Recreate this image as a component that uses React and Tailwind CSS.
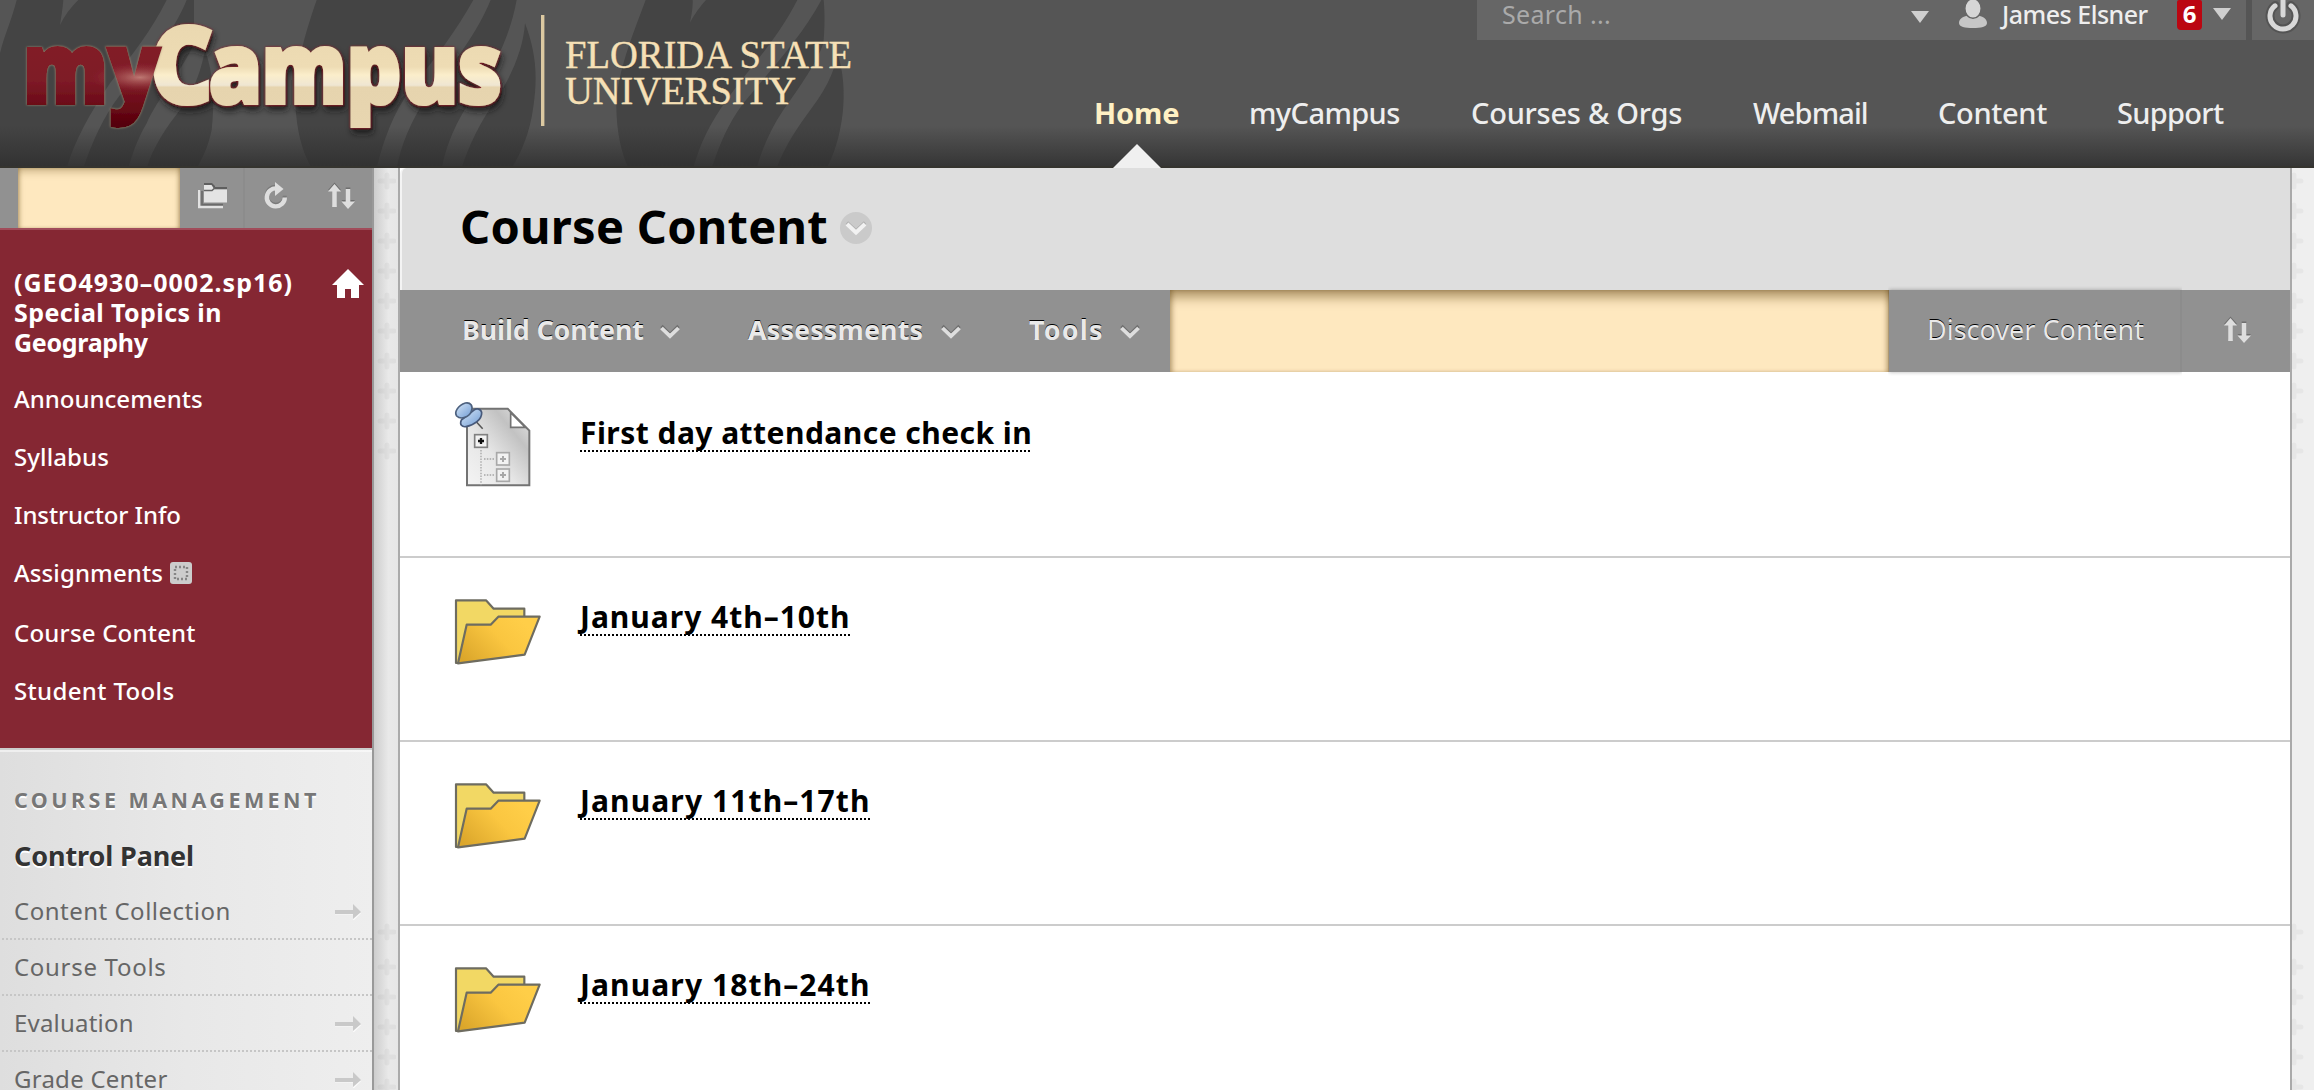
import React from "react";

const NAV = [
  { label: "Home", cls: "w-[155px] font-bold text-[#fff1c4] tracking-[-0.13px]" },
  { label: "myCampus", cls: "w-[222px] tracking-[-0.6px]" },
  { label: "Courses & Orgs", cls: "w-[282px] tracking-[-0.25px]" },
  { label: "Webmail", cls: "w-[185px] tracking-[-0.9px]" },
  { label: "Content", cls: "w-[179px] tracking-[-0.35px]" },
  { label: "Support", cls: "w-[130px] tracking-[-0.7px]" },
];

const MENU = [
  { label: "Announcements", cls: "h-[58px] tracking-[0px]" },
  { label: "Syllabus", cls: "h-[58px] tracking-[0.1px]" },
  { label: "Instructor Info", cls: "h-[58px] tracking-[-0.1px]" },
  { label: "Assignments", cls: "h-[60px] pb-[2px] tracking-[0.1px]", badge: true },
  { label: "Course Content", cls: "h-[58px] tracking-[0.2px]" },
  { label: "Student Tools", cls: "h-[58px] tracking-[0.35px]" },
];

const PANEL = [
  { label: "Content Collection", cls: "tracking-[0.5px]", arrow: true },
  { label: "Course Tools", cls: "tracking-[0.7px]", arrow: false },
  { label: "Evaluation", cls: "tracking-[0.2px]", arrow: true },
  { label: "Grade Center", cls: "tracking-[0.25px]", arrow: true },
];

const ROWS = [
  { label: "First day attendance check in", cls: "tracking-[0.46px]", doc: true },
  { label: "January 4th–10th", cls: "tracking-[0.98px]" },
  { label: "January 11th–17th", cls: "tracking-[1.1px]" },
  { label: "January 18th–24th", cls: "tracking-[1.1px]" },
];

function Stripes() {
  return (
    <svg className="absolute left-0 top-0" width="860" height="168" viewBox="0 0 2580 504">
      <g fill="#444444">
        <path d="M50 0C35 60 15 100 0 160V504H200C225 420 270 340 330 250C400 160 455 90 500 0H235C210 25 195 45 180 75C184 50 188 25 190 0Z" />
        <path d="M560 0H582V130C560 190 470 300 440 370C410 420 395 470 385 504H250C275 430 310 350 360 285C440 190 520 100 560 0Z" />
        <path d="M615 150C640 220 645 300 635 390C625 440 605 480 590 504H440C460 440 500 380 540 330C590 260 605 200 615 150Z" />
        <path d="M950 0C905 130 880 230 888 340C895 420 915 470 935 504H1130C1150 420 1180 340 1230 270C1310 170 1370 90 1420 0Z" />
        <path d="M1472 0H1550C1530 110 1480 210 1420 290C1370 360 1340 430 1325 504H1190C1205 430 1230 370 1280 290C1370 180 1430 100 1472 0Z" />
        <path d="M1575 70C1605 150 1615 220 1600 320C1590 400 1560 465 1535 504H1385C1405 440 1440 370 1480 310C1530 240 1570 150 1575 70Z" />
        <path d="M1937 0C1900 100 1850 220 1849 320C1850 400 1865 460 1885 504H2080C2100 430 2130 370 2180 300C2260 190 2330 120 2392 0H2118C2100 20 2085 40 2070 68C2074 45 2079 25 2078 0Z" />
        <path d="M2464 0H2471C2475 40 2474 90 2470 130C2450 190 2400 260 2350 330C2310 390 2285 450 2270 504H2135C2160 430 2185 370 2230 310C2320 200 2405 110 2464 0Z" />
        <path d="M2512 160C2530 210 2535 280 2528 340C2520 410 2500 470 2480 504H2330C2350 450 2380 400 2420 345C2470 280 2505 220 2512 160Z" />
      </g>
    </svg>
  );
}

function Logo() {
  return (
    <svg className="absolute left-0 top-0" width="870" height="168" viewBox="0 0 870 168">
      <defs>
        <linearGradient id="garnet" gradientUnits="userSpaceOnUse" x1="0" y1="45" x2="0" y2="125">
          <stop offset="0" stopColor="#821b28" />
          <stop offset="0.45" stopColor="#7e1a27" />
          <stop offset="0.8" stopColor="#680915" />
          <stop offset="1" stopColor="#55000a" />
        </linearGradient>
        <linearGradient id="gold" gradientUnits="userSpaceOnUse" x1="0" y1="24" x2="0" y2="126">
          <stop offset="0" stopColor="#ead8b0" />
          <stop offset="0.42" stopColor="#eedcb4" />
          <stop offset="0.5" stopColor="#fbeecb" />
          <stop offset="0.6" stopColor="#efe6d2" />
          <stop offset="0.62" stopColor="#e6d4ae" />
          <stop offset="1" stopColor="#e8d6b0" />
        </linearGradient>
        <radialGradient id="shine" gradientUnits="userSpaceOnUse" cx="140" cy="78" r="50" gradientTransform="translate(0 54) scale(1 .3)">
          <stop offset="0" stopColor="#e7b7a5" stopOpacity=".6" />
          <stop offset="1" stopColor="#a04040" stopOpacity="0" />
        </radialGradient>
        <pattern id="garnetShine" patternUnits="userSpaceOnUse" width="870" height="168">
          <rect width="870" height="168" fill="url(#garnet)" />
          <rect width="870" height="168" fill="url(#shine)" />
        </pattern>
        <filter id="drop" x="-10%" y="-20%" width="120%" height="150%">
          <feDropShadow dx="0" dy="0" stdDeviation="0.9" floodColor="#a51e2c" floodOpacity="1" />
          <feDropShadow dx="2" dy="5" stdDeviation="3" floodColor="#161616" floodOpacity=".85" />
        </filter>
        <filter id="rim" x="-10%" y="-20%" width="120%" height="150%">
          <feDropShadow dx="0" dy="0" stdDeviation="0.8" floodColor="#b49d80" floodOpacity=".8" />
        </filter>
      </defs>
      <g fontFamily="'Open Sans', sans-serif" fontWeight="800" strokeLinejoin="miter" strokeWidth="4">
        <g filter="url(#drop)" fill="url(#gold)" stroke="url(#gold)">
          <text x="150" y="103" fontSize="107" textLength="63" lengthAdjust="spacingAndGlyphs">C</text>
          <text x="209" y="102.5" fontSize="98" textLength="293" lengthAdjust="spacingAndGlyphs">ampus</text>
        </g>
        <g filter="url(#rim)" fill="url(#garnetShine)" stroke="url(#garnetShine)">
          <text x="23" y="102.5" fontSize="98" textLength="137" lengthAdjust="spacingAndGlyphs">my</text>
        </g>
      </g>
      <rect x="541" y="15" width="3.4" height="111" fill="#dcc9a1" />
      <g fontFamily="'Liberation Serif', serif" fontSize="40.5" fill="#f6e0b6" stroke="#f6e0b6" strokeWidth=".4">
        <text x="565" y="68" textLength="287" lengthAdjust="spacingAndGlyphs">FLORIDA STATE</text>
        <text x="565" y="104" textLength="231" lengthAdjust="spacingAndGlyphs">UNIVERSITY</text>
      </g>
    </svg>
  );
}

function DownTriangle({ className }) {
  return (
    <svg className={className} width="18" height="12" viewBox="0 0 18 12">
      <path d="M0 0H18L9 12Z" fill="#cfcfcf" />
    </svg>
  );
}

function Chevron({ className }) {
  return (
    <svg className={className} width="22" height="17" viewBox="0 0 22 17">
      <path d="M2.5 3L11 11.5L19.5 3" fill="none" stroke="#6f6f6f" strokeWidth="3.2" />
      <path d="M2.5 5L11 13.2L19.5 5" fill="none" stroke="#dedede" strokeWidth="3.8" />
    </svg>
  );
}

function Swap({ className }) {
  const up = "M6.5 0L13 7.5H8.800V23H4.200V7.500H0Z";
  const down = "M17.700 5H22.300V17.500H27L20 25L13.500 17.500H17.700Z";
  return (
    <svg className={className} width="28" height="28" viewBox="0 -2 28 28">
      <g fill="#6f6f6f" transform="translate(0 -1.600)">
        <path d={up} />
        <path d={down} />
      </g>
      <g fill="#dedede">
        <path d={up} />
        <path d={down} />
      </g>
    </svg>
  );
}

function Header() {
  return (
    <header className="relative h-[168px] overflow-hidden bg-[#555555]">
      <Stripes />
      <div className="absolute inset-x-0 bottom-0 h-[42px] bg-linear-to-b from-transparent to-[#2e2e2e]/85" />
      <div className="absolute inset-x-0 bottom-0 h-[2px] bg-[#35342f]" />
      <Logo />
      <div className="relative flex h-full flex-col">
        <div className="ml-[1477px] flex h-[40px]">
          <div className="flex w-[769px] bg-[#666666] text-[25px] leading-[28px]">
            <span className="ml-[25px] w-[409px] tracking-[0.33px] text-[#aaaaaa]">Search ...</span>
            <DownTriangle className="mt-[11px]" />
            <svg className="ml-[30px]" width="28" height="30" viewBox="0 0 28 30">
              <path d="M0 23C0 18 6 16 9 15.500L14 18.500L19 15.500C22 16 28 18 28 23C28 27 22 28 14 28S0 27 0 23Z" fill="#c6c6c6" />
              <ellipse cx="14" cy="8.500" rx="8.200" ry="9.800" fill="#d6d6d6" stroke="#666" strokeWidth="1.500" />
            </svg>
            <span className="ml-[15px] w-[175px] font-medium tracking-[-0.5px] text-[#eeeeee]">James Elsner</span>
            <span className="h-[30px] w-[25px] rounded-b-[4px] rounded-t-[2px] bg-[#bb0611] text-center text-[24px] font-bold leading-[28px] text-white">6</span>
            <DownTriangle className="ml-[11px] mt-[8px]" />
          </div>
          <div className="ml-[6px] flex w-[62px] justify-center bg-[#666666]">
            <svg width="36" height="36" viewBox="0 0 36 36">
              <g fill="none" stroke="#3f3f3f" strokeOpacity=".45" strokeWidth="9" strokeLinecap="round">
                <path d="M10.200 5.500A13 13 0 1 0 25.800 5.500" />
              </g>
              <g fill="none" stroke="#d8d8d8" strokeWidth="5" strokeLinecap="round">
                <path d="M10 5.800A13 13 0 1 0 26 5.800" />
                <path d="M18 -3V15" />
              </g>
            </svg>
          </div>
        </div>
        <nav className="ml-[1094px] mt-[53px] flex text-[29px] font-medium leading-[40px] text-[#eeeeee]">
          {NAV.map((n) => (
            <span key={n.label} className={`shrink-0 whitespace-nowrap ${n.cls}`}>{n.label}</span>
          ))}
        </nav>
        <svg className="ml-[1113px] mt-auto" width="48" height="24" viewBox="0 0 48 24">
          <path d="M0 24L24 0L48 24Z" fill="#f0f0f0" />
        </svg>
      </div>
    </header>
  );
}

function HeaderTools() {
  return (
    <div className="flex h-[60px] bg-[#919191]">
      <div className="ml-[18px] w-[162px] bg-[#fee8bf] shadow-[inset_0_5px_8px_-2px_rgba(90,60,10,.35),inset_3px_0_4px_-2px_rgba(90,60,10,.4),inset_-3px_0_4px_-2px_rgba(90,60,10,.4)]" />
      <div className="flex w-[65px] border-r-2 border-[#8c8c8c] pl-[18px] pt-[14px]">
        <svg width="30" height="28" viewBox="0 0 30 28">
          <path d="M6 3V1H14L17 4V5H29V7H6Z" fill="#5e5e5e" />
          <path d="M1 8V25H25" fill="none" stroke="#e2e2e2" strokeWidth="2.400" />
          <path d="M4 9V22.600H25" fill="none" stroke="#6a6a6a" strokeWidth="1.600" />
          <path d="M6 3H13.500L16.500 7.500H29V20.500H6Z" fill="#e4e4e4" />
          <path d="M6 8.500H14L17 5.800" fill="none" stroke="#666" strokeWidth="1.500" />
        </svg>
      </div>
      <svg className="ml-[18px] mt-[14px]" width="26" height="28" viewBox="0 0 26 28">
        <path d="M14 6A9 9 0 1 0 21.800 15" fill="none" stroke="#7a7a7a" strokeWidth="4" transform="translate(0 -1.200)" />
        <path d="M14 6.500A9 9 0 1 0 21.800 15.500" fill="none" stroke="#dedede" strokeWidth="4.400" />
        <path d="M12 0L20.500 7L12 14Z" fill="#dedede" />
      </svg>
      <Swap className="ml-[39px] mt-[14px]" />
    </div>
  );
}

function CourseMenu() {
  return (
    <div className="h-[520px] border-t-2 border-[#a14c5a] bg-[#852733] pl-[14px] pt-[37px] text-white">
      <div className="flex justify-between pr-[8px]">
        <div className="text-[25px] font-bold leading-[30px]">
          <div className="tracking-[1.020px]">(GEO4930–0002.sp16)</div>
          <div className="tracking-[0.400px]">Special Topics in</div>
          <div className="tracking-[-0.300px]">Geography</div>
        </div>
        <svg className="mt-[2px]" width="32" height="29" viewBox="0 0 32 29">
          <path d="M16 0L32 16H27V29H19V20H13V29H5V16H0Z" fill="#fff" />
        </svg>
      </div>
      <ul className="mt-[13px] text-[24px] font-medium">
        {MENU.map((m) => (
          <li key={m.label} className={`flex items-center ${m.cls}`}>
            {m.label}
            {m.badge && (
              <svg className="ml-[7px]" width="22" height="22" viewBox="0 0 22 22">
                <rect width="22" height="22" rx="3" fill="#cccccc" />
                <rect x="5" y="5" width="12" height="12" fill="none" stroke="#858585" strokeWidth="2.400" strokeDasharray="2 2" />
              </svg>
            )}
          </li>
        ))}
      </ul>
    </div>
  );
}

function ControlPanel() {
  return (
    <div className="h-[342px] overflow-hidden border-t-2 border-[#cccccc] bg-linear-to-r from-[#dedede] via-[#e8e8e8] to-[#eeeeee] [text-shadow:0_2px_0_#ffffff]">
      <div className="border-t-2 border-white/50 pl-[14px] pt-[33px] text-[21.5px] font-bold leading-[30px] tracking-[3.460px] text-[#777777]">COURSE MANAGEMENT</div>
      <div className="mt-[21px] pl-[14px] text-[27px] font-bold leading-[40px] tracking-[-0.120px] text-[#333333]">Control Panel</div>
      <ul className="mt-[8px] text-[24px] leading-[53px] text-[#666666] [text-shadow:none]">
        {PANEL.map((p) => (
          <li key={p.label} className="flex h-[56px] justify-between bg-[repeating-linear-gradient(90deg,transparent_0_2px,#c6c6c6_2px_4px)] bg-[length:100%_2px] bg-bottom bg-no-repeat pl-[14px] pr-[11px]">
            <span className={p.cls}>{p.label}</span>
            {p.arrow && (
              <svg className="mt-[20px]" width="26" height="16" viewBox="0 0 26 16">
                <path d="M0 8.500H18V2L26 9.500L18 17V10.500H0Z" fill="#fafafa" />
                <path d="M0 6H18V0L26 8L18 15V10H0Z" fill="#c9c9c9" />
              </svg>
            )}
          </li>
        ))}
      </ul>
    </div>
  );
}

const PLUSES = [...Array.from({ length: 10 }, (_, i) => 13 + i * 30), 764, 799, 829, 859, 889, 919];

function Texture({ cx }) {
  return (
    <svg width="22" height="922" viewBox="0 0 22 922">
      {PLUSES.map((y) => (
        <path key={y} d={`M${cx - 7} ${y}H${cx + 7}M${cx} ${y - 6}V${y + 6}`} stroke="#000" strokeOpacity=".035" strokeWidth="5" strokeLinecap="round" />
      ))}
    </svg>
  );
}

function FolderIcon() {
  return (
    <svg width="88" height="67" viewBox="75 655 264 201">
      <defs>
        <linearGradient id="front" x1="0" y1=".8" x2=".9" y2=".3">
          <stop offset="0" stopColor="#dba62b" />
          <stop offset=".6" stopColor="#fac640" />
          <stop offset="1" stopColor="#ffce48" />
        </linearGradient>
      </defs>
      <g stroke="#6e6c60" strokeWidth="6.500" strokeLinejoin="round">
        <path d="M81 662H171L194 687H286V720L90 850H81Z" fill="#f2d864" />
        <path d="M113 735H185L208 711H332L287 825L87 851Z" fill="url(#front)" />
      </g>
    </svg>
  );
}

function DocIcon() {
  return (
    <svg width="79" height="87" viewBox="69 60 237 261">
      <defs>
        <linearGradient id="paper" x1="0" y1="1" x2=".9" y2=".1">
          <stop offset="0" stopColor="#f4f4f4" />
          <stop offset=".45" stopColor="#e6e6e6" />
          <stop offset=".8" stopColor="#c2c2c2" />
          <stop offset="1" stopColor="#dadada" />
        </linearGradient>
        <linearGradient id="pin" x1="0" y1="0" x2="1" y2="1">
          <stop offset="0" stopColor="#d9e8f8" />
          <stop offset="1" stopColor="#6f9bd4" />
        </linearGradient>
      </defs>
      <path d="M111 86H233L298 152V316H111Z" fill="url(#paper)" stroke="#737373" strokeWidth="6" />
      <path d="M242 98V142H286Z" fill="#fff" stroke="#737373" strokeWidth="5" />
      <g fill="none" stroke="#a5a5a5" strokeWidth="4" strokeDasharray="4.500 4">
        <path d="M153 210V316" />
        <path d="M162 237H196" />
        <path d="M162 285H196" />
      </g>
      <g fill="#f2f2f2" stroke="#808080" strokeWidth="5">
        <rect x="134" y="164" width="38" height="38" />
        <g stroke="#a8a8a8">
          <rect x="200" y="218" width="38" height="37" />
          <rect x="200" y="267" width="38" height="37" />
        </g>
      </g>
      <path d="M144 183H162M153 174V192" stroke="#111" strokeWidth="7" />
      <path d="M210 237H228M219 228V246M210 285H228M219 276V294" stroke="#a8a8a8" strokeWidth="6" />
      <path d="M136 122L158 146" stroke="#555" strokeWidth="4.500" />
      <path d="M94 120C88 134 96 142 108 140C132 136 156 118 155 98C153 86 140 84 132 90Z" fill="url(#pin)" stroke="#47597a" strokeWidth="5" />
      <path d="M80 108C72 96 84 76 106 69C122 66 130 78 124 94C118 112 92 120 80 108Z" fill="url(#pin)" stroke="#4d617f" strokeWidth="5" />
    </svg>
  );
}

function ActionBar() {
  return (
    <div className="flex h-[82px] bg-[#919191] text-[27px] leading-[79px] text-[#e9e9e9]">
      <div className="flex w-[770px] font-bold [text-shadow:0_-1.5px_0_#000]">
        <div className="ml-[62px] flex w-[286px]">
          <span className="w-[197px] tracking-[-0.220px]">Build Content</span>
          <Chevron className="mt-[33px]" />
        </div>
        <div className="flex w-[281px]">
          <span className="w-[192px] tracking-[0.080px]">Assessments</span>
          <Chevron className="mt-[33px]" />
        </div>
        <div className="flex">
          <span className="w-[90px] tracking-[1.130px]">Tools</span>
          <Chevron className="mt-[33px]" />
        </div>
      </div>
      <div className="w-[719px] bg-[#fee8bf] shadow-[inset_0_13px_12px_-6px_rgba(90,60,10,.5),inset_4px_0_5px_-2px_rgba(90,60,10,.4),inset_-4px_0_5px_-2px_rgba(90,60,10,.4)]" />
      <div className="w-[293px] border-r-2 border-[#8c8c8c] pl-[38px] tracking-[0px] shadow-[0_0_4px_rgba(0,0,0,.3)] [clip-path:inset(-4px_0px_-4px_-1px)] [text-shadow:0_-1.5px_0_#000]">Discover Content</div>
      <Swap className="ml-[42px] mt-[26px]" />
    </div>
  );
}

export default function App() {
  return (
    <div className="h-[1090px] w-[2314px] overflow-hidden bg-[#efefef] font-['Noto_Sans',sans-serif]">
      <Header />
      <div className="flex h-[922px]">
        <aside className="w-[374px] shrink-0 border-r-2 border-[#999999]">
          <HeaderTools />
          <CourseMenu />
          <ControlPanel />
        </aside>
        <div className="w-[24px] shrink-0 bg-linear-to-r from-[#cdcdcd] via-[#e9e9e9] via-60% to-[#e6e6e6]">
          <Texture cx={13} />
        </div>
        <main className="w-[1894px] shrink-0 border-x-2 border-[#aaaaaa] bg-white">
          <div className="flex h-[122px] rounded-tl-[6px] border-l-2 border-[#f4f4f4] bg-[#dedede] pl-[58px] pt-[28px]">
            <h1 className="text-[47px] font-bold leading-[60px] tracking-[0.250px] text-black">Course Content</h1>
            <svg className="ml-[12px] mt-[16px]" width="32" height="32" viewBox="0 0 32 32">
              <circle cx="16" cy="16" r="16" fill="#cacaca" />
              <path d="M7 10.500L16 19L25 10.500" fill="none" stroke="#b0b0b0" strokeWidth="3.500" />
              <path d="M7 12L16 20.500L25 12" fill="none" stroke="#f2f2f2" strokeWidth="4" />
            </svg>
          </div>
          <ActionBar />
          {ROWS.map((r) => (
            <div key={r.label} className={`flex border-b-2 border-[#cccccc] ${r.doc ? "h-[186px]" : "h-[184px]"}`}>
              <div className={`w-[127px] shrink-0 ${r.doc ? "ml-[53px] pt-[28px]" : "ml-[52px] pl-[2px] pt-[40px] mr-[1px]"}`}>
                {r.doc ? <DocIcon /> : <FolderIcon />}
              </div>
              <a className={`h-[40px] whitespace-nowrap bg-[repeating-linear-gradient(90deg,#000_0_2px,transparent_2px_4px)] bg-[length:100%_2px] bg-bottom bg-no-repeat text-[30px] font-bold leading-[41px] text-black ${r.doc ? "mt-[40px]" : "mt-[38px]"} ${r.cls}`}>
                {r.label}
              </a>
            </div>
          ))}
        </main>
        <Texture cx={2} />
      </div>
    </div>
  );
}
